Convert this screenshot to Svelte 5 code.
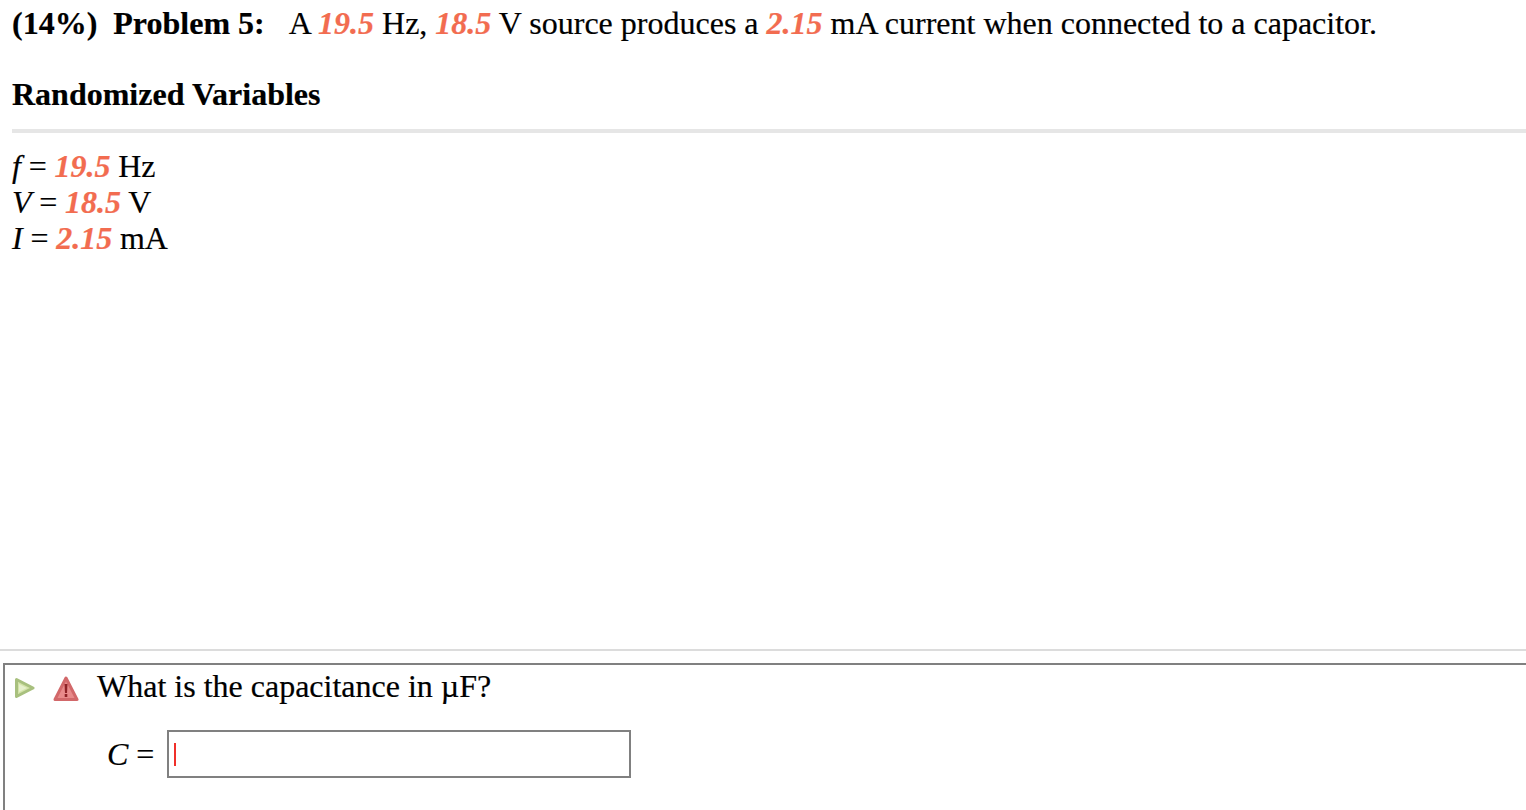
<script>
	const vars = [
		{ sym: 'f', val: '19.5', unit: 'Hz' },
		{ sym: 'V', val: '18.5', unit: 'V' },
		{ sym: 'I', val: '2.15', unit: 'mA' }
	];
</script>

<main>
	<p class="problem">
		<b class="pct">(14%)</b><b class="num">Problem 5:</b><span>A <i class="rnd">19.5</i> Hz, <i class="rnd">18.5</i> V source produces a <i class="rnd">2.15</i> mA current when connected to a capacitor.</span>
	</p>
	<h2>Randomized Variables</h2>
	<div class="rule"></div>
	<div class="vars">
		{#each vars as v}
			<div><i>{v.sym}</i> = <i class="rnd">{v.val}</i> {v.unit}</div>
		{/each}
	</div>
	<div class="divider"></div>
	<section class="box">
		<div class="question">
			<svg class="play" width="22" height="24" viewBox="0 0 22 24">
				<path d="M2.5 3.5 L19 12 L2.5 20.5 Z" fill="#d3e3a8" stroke="#a8c07e" stroke-width="3" stroke-linejoin="round" />
				<path d="M5 8 L13 12 L5 16 Z" fill="#e6f0cc" />
			</svg>
			<svg class="warn" width="28" height="28" viewBox="0 0 28 28">
				<path d="M14 3 L25 24.5 H3 Z" fill="#e88a8a" stroke="#d2686a" stroke-width="3" stroke-linejoin="round" />
				<path d="M12.5 9 H15.5 L15 18 H13 Z" fill="#8e2226" />
				<rect x="12.7" y="19" width="2.6" height="3" fill="#8e2226" />
			</svg>
			<span>What is the capacitance in µF?</span>
		</div>
		<div class="answer">
			<span><i>C</i> =</span>
			<div class="input"><span class="caret"></span></div>
		</div>
	</section>
</main>

<style>
	:global(body) {
		margin: 0;
		background: #fff;
		overflow: hidden;
	}
	main {
		font-family: 'Liberation Serif', 'Times New Roman', serif;
		font-size: 32px;
		line-height: 36px;
		color: #000;
		height: 810px;
		overflow: hidden;
		-webkit-text-stroke: 0.2px currentColor;
	}
	.problem {
		margin: 0;
		padding: 5px 0 0 12px;
		white-space: nowrap;
	}
	.pct { margin-right: 16px; }
	.num { margin-right: 24px; }
	.rnd {
		color: #f26c50;
		font-weight: bold;
		font-style: italic;
	}
	h2 {
		font-size: 32px;
		line-height: 36px;
		font-weight: bold;
		margin: 35px 0 0 12px;
	}
	.rule {
		height: 4px;
		background: #e6e6e6;
		margin: 17px 0 0 12px;
	}
	.vars {
		margin: 15px 0 0 12px;
		height: 108px;
		word-spacing: -0.25px;
	}
	.divider {
		height: 2px;
		background: #dcdcdc;
		margin-top: 393px;
	}
	.box {
		margin: 12px 0 0 3px;
		border: 2px solid #808080;
		border-right: none;
		height: 160px;
		box-sizing: border-box;
	}
	.question {
		display: flex;
		align-items: center;
		height: 42px;
		padding-left: 9px;
	}
	.play { margin-right: 16px; margin-top: 4px; filter: blur(0.6px); }
	.warn { margin-right: 17px; margin-top: 5px; filter: blur(0.6px); }
	.answer {
		display: flex;
		align-items: center;
		gap: 13px;
		padding-left: 102px;
		margin-top: 23px;
	}
	.input {
		width: 464px;
		height: 48px;
		box-sizing: border-box;
		border: 2px solid #808080;
		display: flex;
		align-items: center;
		padding-left: 5px;
	}
	.caret {
		width: 2px;
		height: 23px;
		background: #f0302a;
	}
</style>
